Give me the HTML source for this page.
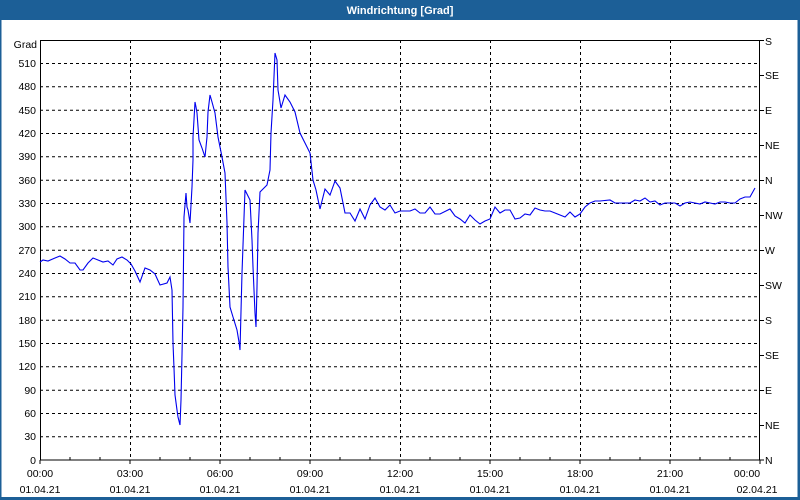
<!DOCTYPE html>
<html><head><meta charset="utf-8"><style>
html,body{margin:0;padding:0;background:#fff}
svg{display:block}
text{font-family:"Liberation Sans",sans-serif;font-size:10.5px;fill:#000}
</style></head><body>
<svg width="800" height="500" viewBox="0 0 800 500" xmlns="http://www.w3.org/2000/svg">
<rect x="0" y="0" width="800" height="500" fill="#fff"/>
<rect x="0" y="0" width="800" height="20" fill="#1c5f97"/>
<rect x="0" y="0" width="1.5" height="500" fill="#1c5f97"/>
<rect x="797.5" y="0" width="2.5" height="500" fill="#1c5f97"/>
<rect x="0" y="497" width="800" height="3" fill="#1c5f97"/>
<text x="400" y="14" text-anchor="middle" style="fill:#fff;font-weight:bold;font-size:11px">Windrichtung [Grad]</text>
<g stroke="#000" stroke-width="1" stroke-dasharray="3,3" fill="none">
<path d="M40 63.5H760M40 86.8H760M40 110.2H760M40 133.5H760M40 156.8H760M40 180.2H760M40 203.5H760M40 226.8H760M40 250.2H760M40 273.5H760M40 296.8H760M40 320.2H760M40 343.5H760M40 366.8H760M40 390.2H760M40 413.5H760M40 436.8H760"/>
<path d="M130.5 40V460M220.5 40V460M310.5 40V460M400.5 40V460M490.5 40V460M580.5 40V460M670.5 40V460"/>
</g>
<rect x="40.5" y="40.5" width="719" height="419.5" fill="none" stroke="#000" stroke-width="1"/>
<g stroke="#000" stroke-width="1">
<path d="M70 460v-3M100 460v-3M160 460v-3M190 460v-3M250 460v-3M280 460v-3M340 460v-3M370 460v-3M430 460v-3M460 460v-3M520 460v-3M550 460v-3M610 460v-3M640 460v-3M700 460v-3M730 460v-3"/>
<path d="M40 460v4M130 460v4M220 460v4M310 460v4M400 460v4M490 460v4M580 460v4M670 460v4M760 460v4"/>
<path d="M760 40.5h4M760 75.5h4M760 110.5h4M760 145.5h4M760 180.5h4M760 215.5h4M760 250.5h4M760 285.5h4M760 320.5h4M760 355.5h4M760 390.5h4M760 425.5h4M760 460h4"/>
</g>
<g text-anchor="end">
<text x="37" y="48">Grad</text>
<text x="36" y="67">510</text><text x="36" y="90">480</text><text x="36" y="114">450</text><text x="36" y="137">420</text><text x="36" y="160">390</text><text x="36" y="184">360</text><text x="36" y="207">330</text><text x="36" y="230">300</text><text x="36" y="254">270</text><text x="36" y="277">240</text><text x="36" y="300">210</text><text x="36" y="324">180</text><text x="36" y="347">150</text><text x="36" y="370">120</text><text x="36" y="394">90</text><text x="36" y="417">60</text><text x="36" y="440">30</text><text x="36" y="464">0</text>
</g>
<g>
<text x="765" y="45">S</text><text x="765" y="79">SE</text><text x="765" y="114">E</text><text x="765" y="149">NE</text><text x="765" y="184">N</text><text x="765" y="219">NW</text><text x="765" y="254">W</text><text x="765" y="289">SW</text><text x="765" y="324">S</text><text x="765" y="359">SE</text><text x="765" y="394">E</text><text x="765" y="429">NE</text><text x="765" y="464">N</text>
</g>
<g text-anchor="middle">
<text x="40" y="477">00:00</text><text x="130" y="477">03:00</text><text x="220" y="477">06:00</text><text x="310" y="477">09:00</text><text x="400" y="477">12:00</text><text x="490" y="477">15:00</text><text x="580" y="477">18:00</text><text x="670" y="477">21:00</text><text x="747" y="477">00:00</text>
<text x="40" y="493">01.04.21</text><text x="130" y="493">01.04.21</text><text x="220" y="493">01.04.21</text><text x="310" y="493">01.04.21</text><text x="400" y="493">01.04.21</text><text x="490" y="493">01.04.21</text><text x="580" y="493">01.04.21</text><text x="670" y="493">01.04.21</text><text x="757" y="493">02.04.21</text>
</g>
<polyline fill="none" stroke="#0000ee" stroke-width="1.1" points="40,262 43,260 48,261 55,258 60,256 65,259 70,263 75,263 80,270 83,270 88,263 93,258 98,260 103,262 108,261 113,265 117,259 122,257 127,260 131,264 135,271 140,282 145,268 150,270 155,274 160,285 167,283 170,277 172,290 173,343 174,368 175,395 177,410 178,417 180,425 181,400 182,355 183,307 184,217 186,193 187,207 188,210 190,223 192,187 193,160 193,137 195,102 196,107 197,113 199,140 202,148 205,157 207,137 208,112 210,95 212,102 215,113 218,137 222,157 225,173 227,223 228,267 230,307 233,317 237,330 239,342 240,350 242,273 245,190 250,200 252,240 253,267 255,313 256,327 257,287 258,233 260,192 267,185 270,170 271,133 273,100 275,53 277,60 278,90 281,108 285,95 290,102 295,112 300,133 305,143 310,153 313,180 316,190 320,209 325,189 330,195 335,181 340,188 345,213 350,213 355,221 360,209 365,219 370,205 375,198 380,207 385,210 390,205 395,213 400,211 410,211 415,209 420,213 425,213 430,207 435,214 440,214 450,209 455,216 460,219 465,223 470,215 475,220 480,224 485,221 490,219 495,207 500,213 505,210 510,210 515,219 520,218 525,214 530,215 535,208 540,210 545,211 550,211 555,213 560,215 565,217 570,212 575,217 580,214 585,207 590,203 595,201 600,201 610,200 615,203 620,203 630,203 635,200 640,201 645,198 650,202 655,201 660,205 665,203 670,203 675,203 680,206 685,203 690,202 700,204 705,202 710,203 715,204 720,202 725,202 730,203 735,203 740,199 745,197 750,197 755,188"/>
</svg>
</body></html>
